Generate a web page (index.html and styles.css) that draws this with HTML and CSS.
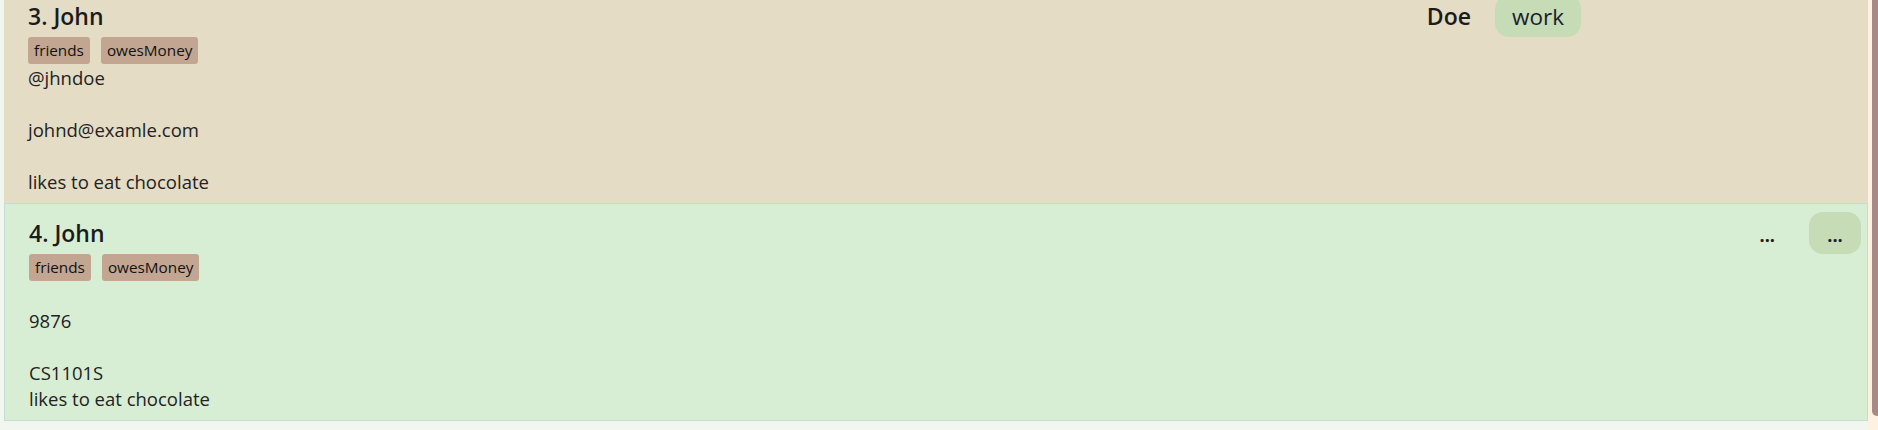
FILE: index.html
```html
<!DOCTYPE html>
<html lang="en">
<head>
<meta charset="utf-8">
<title>Contacts</title>
<link rel="stylesheet" href="styles.css">
</head>
<body>
<div class="viewport">
  <div class="list">
    <div class="card card-plain">
      <div class="name-row">
        <span class="name">3. John</span>
        <span class="spacer"></span>
        <div class="trail trail-wide">
          <span class="name">Doe</span>
          <span class="pill">work</span>
        </div>
      </div>
      <div class="tags">
        <span class="tag">friends</span>
        <span class="tag">owesMoney</span>
      </div>
      <div class="field">@jhndoe</div>
      <div class="field"></div>
      <div class="field">johnd@examle.com</div>
      <div class="field"></div>
      <div class="field">likes to eat chocolate</div>
    </div>
    <div class="card card-selected">
      <div class="name-row">
        <span class="name">4. John</span>
        <span class="spacer"></span>
        <div class="trail trail-narrow">
          <span class="ellipsis">...</span>
          <span class="pill pill-btn">...</span>
        </div>
      </div>
      <div class="tags">
        <span class="tag">friends</span>
        <span class="tag">owesMoney</span>
      </div>
      <div class="field"></div>
      <div class="field">9876</div>
      <div class="field"></div>
      <div class="field">CS1101S</div>
      <div class="field">likes to eat chocolate</div>
    </div>
  </div>
  <div class="track"><div class="thumb"></div></div>
</div>
</body>
</html>
```
FILE: styles.css
```css
* { box-sizing: border-box; }
html, body {
  margin: 0;
  padding: 0;
}
body {
  width: 1878px;
  height: 430px;
  overflow: hidden;
  background: #f1f7ee;
  font-family: "Open Sans", "Noto Sans", sans-serif;
  color: #222222;
}
.viewport {
  display: flex;
  width: 1878px;
  height: 430px;
}
.list {
  flex: 1;
  padding-left: 4px;
  margin-top: -14px;
  display: flex;
  flex-direction: column;
}
.card {
  border: 1px solid transparent;
  padding: 8px 6px 8px 23px;
}
.card-plain {
  background: #e5dcc6;
  border-color: #e5dcc6;
  height: 217px;
}
.card-selected {
  background: #d8eed4;
  border-color: #c3dcd6;
  padding-left: 24px;
  height: 218px;
}
.name-row {
  display: flex;
  align-items: center;
  height: 42px;
}
.name {
  font-weight: 600;
  font-size: 23px;
  line-height: 31px;
  color: #1b1b1b;
}
.spacer { flex: 1; }
.trail {
  display: flex;
  align-items: center;
}
.trail-wide { gap: 24px; margin-right: 280px; }
.trail-narrow { gap: 34px; }
.pill {
  background: #c5dcb6;
  border-radius: 14px;
  height: 42px;
  display: flex;
  align-items: center;
  padding: 0 17px;
  font-size: 22.5px;
  color: #1a1c2e;
}
.pill-btn {
  width: 52px;
  justify-content: center;
  padding: 0;
  font-size: 18px;
  font-weight: 700;
  padding-top: 4px;
}
.ellipsis {
  font-size: 18px;
  font-weight: 700;
  color: #1b1b1b;
  padding-top: 4px;
}
.tags {
  display: flex;
  gap: 11px;
  height: 28px;
  align-items: flex-start;
}
.tag {
  background: #c2a692;
  border-radius: 3px;
  font-size: 15.3px;
  font-weight: 500;
  line-height: 27px;
  padding: 0 6px;
  color: #111111;
}
.field {
  height: 26px;
  line-height: 26px;
  font-size: 18.5px;
  color: #222222;
  white-space: nowrap;
}
.track {
  width: 10px;
  background: #fdf2e2;
  display: flex;
  justify-content: flex-end;
}
.thumb {
  width: 6px;
  height: 416px;
  background: #a98987;
  border-bottom-left-radius: 5px;
}
```
